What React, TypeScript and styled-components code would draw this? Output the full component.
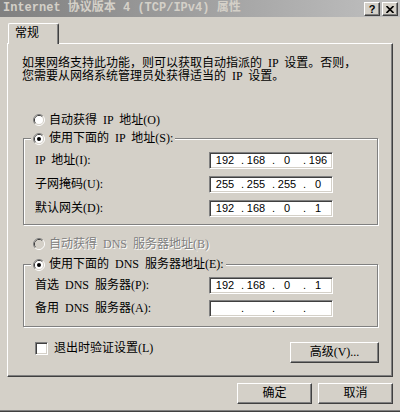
import styled, { createGlobalStyle } from "styled-components";

const face = "#d4d0c8";
const shadow = "#808080";
const darkShadow = "#404040";
const highlight = "#ffffff";
const uiFont = `"Liberation Serif", "Noto Sans CJK SC", serif`;

const GlobalStyle = createGlobalStyle`
  html, body {
    margin: 0;
    padding: 0;
    background: ${face};
  }
  * {
    box-sizing: border-box;
  }
`;

const Window = styled.div`
  width: 400px;
  height: 412px;
  display: flex;
  flex-direction: column;
  background: ${face};
  box-shadow: inset 0 -1px 0 ${darkShadow}, inset 0 -2px 0 ${shadow};
  font-family: ${uiFont};
  font-size: 12px;
  color: #000;
  overflow: hidden;
`;

const TitleBar = styled.div`
  flex: none;
  height: 17px;
  display: flex;
  padding: 0 2px 0 3px;
  background: linear-gradient(to right, #808080, #c0c0c0);
`;

const Title = styled.span`
  flex: 1;
  font-family: "Liberation Mono", "Noto Sans CJK SC", monospace;
  font-weight: bold;
  font-size: 12px;
  line-height: 17px;
  color: ${face};
  white-space: nowrap;
`;

const CaptionButtons = styled.div`
  display: flex;
  gap: 2px;
  margin-top: 2px;
`;

const CaptionButton = styled.div`
  width: 16px;
  height: 14px;
  display: flex;
  align-items: center;
  justify-content: center;
  background: ${face};
  border-top: 1px solid ${highlight};
  border-left: 1px solid ${highlight};
  border-right: 1px solid ${darkShadow};
  border-bottom: 1px solid ${darkShadow};
  box-shadow: inset -1px -1px 0 ${shadow};
  font-family: "Liberation Sans", sans-serif;
  font-weight: bold;
  font-size: 11px;
  line-height: 11px;
`;

const TabStrip = styled.div`
  flex: none;
  display: flex;
  height: 20px;
  margin-top: 6px;
  padding-left: 8px;
`;

const Tab = styled.div`
  position: relative;
  z-index: 1;
  width: 51px;
  height: 21px;
  padding: 3px 0 0 6px;
  background: ${face};
  border-top: 1px solid ${highlight};
  border-left: 1px solid ${highlight};
  border-right: 1px solid ${darkShadow};
  border-top-left-radius: 2px;
  border-top-right-radius: 2px;
  box-shadow: inset -1px 0 0 ${shadow};
  line-height: 13px;
`;

const Panel = styled.div`
  flex: none;
  height: 334px;
  margin: 0 7px;
  padding: 13px 0 0 14px;
  display: flex;
  flex-direction: column;
  word-spacing: 3px;
  border-top: 1px solid ${highlight};
  border-left: 1px solid ${highlight};
  border-right: 1px solid ${darkShadow};
  border-bottom: 1px solid ${darkShadow};
  box-shadow: inset -1px -1px 0 ${shadow};
`;

const Intro = styled.p`
  margin: 0;
  line-height: 13px;
  white-space: nowrap;
`;

const OptionRow = styled.div<{ $top: number }>`
  display: flex;
  align-items: center;
  gap: 4px;
  height: 16px;
  margin-top: ${(p) => p.$top}px;
  padding-left: 11px;
  line-height: 13px;
`;

const OptionText = styled.span<{ $disabled?: boolean }>`
  white-space: nowrap;
  color: ${(p) => (p.$disabled ? shadow : "#000")};
  text-shadow: ${(p) => (p.$disabled ? `1px 1px 0 ${highlight}` : "none")};
`;

const Group = styled.fieldset<{ $top: number; $gap: number; $padTop: number; $padBottom: number }>`
  width: 355px;
  margin: ${(p) => p.$top}px 0 0 1px;
  padding: ${(p) => p.$padTop}px 0 ${(p) => p.$padBottom}px 11px;
  display: flex;
  flex-direction: column;
  gap: ${(p) => p.$gap}px;
  border: 1px solid ${shadow};
  box-shadow: inset 1px 1px 0 ${highlight}, 1px 1px 0 ${highlight};
`;

const GroupLegend = styled.legend`
  display: flex;
  align-items: flex-start;
  gap: 4px;
  height: 15px;
  margin-left: -4px;
  padding: 0 2px;
  background: ${face};
  line-height: 15px;
  white-space: nowrap;
`;

const RadioSvg = styled.svg<{ $offset?: number }>`
  flex: none;
  display: block;
  margin-top: ${(p) => p.$offset ?? 0}px;
`;

const FieldRow = styled.div`
  display: flex;
  align-items: center;
  height: 17px;
`;

const FieldLabel = styled.span`
  width: 174px;
  line-height: 13px;
  white-space: nowrap;
`;

const IpBox = styled.div`
  width: 124px;
  height: 17px;
  display: flex;
  align-items: center;
  padding-left: 4px;
  background: #fff;
  border-top: 1px solid ${shadow};
  border-left: 1px solid ${shadow};
  border-right: 1px solid ${highlight};
  border-bottom: 1px solid ${highlight};
  box-shadow: inset 1px 1px 0 ${darkShadow}, inset -1px -1px 0 ${face};
  font-family: "Liberation Sans", sans-serif;
  font-size: 11px;
  line-height: 13px;
  word-spacing: 0;
`;

const Octet = styled.span`
  width: 22px;
  text-align: center;
`;

const Dot = styled.span`
  width: 9px;
  padding-right: 1px;
  text-align: right;
`;

const BottomRow = styled.div`
  width: 356px;
  margin: 15px 0 0 1px;
  padding-left: 12px;
  display: flex;
  justify-content: space-between;
  align-items: flex-start;
`;

const CheckLabel = styled.label`
  display: flex;
  align-items: flex-start;
  gap: 6px;
  line-height: 13px;
  white-space: nowrap;
`;

const CheckBox = styled.span`
  width: 13px;
  height: 13px;
  background: #fff;
  border-top: 1px solid ${shadow};
  border-left: 1px solid ${shadow};
  border-right: 1px solid ${highlight};
  border-bottom: 1px solid ${highlight};
  box-shadow: inset 1px 1px 0 ${darkShadow}, inset -1px -1px 0 ${face};
`;

const Button = styled.button<{ $width: number }>`
  width: ${(p) => p.$width}px;
  height: 21px;
  padding: 0;
  background: ${face};
  color: #000;
  font-family: ${uiFont};
  font-size: 12px;
  line-height: 13px;
  border-top: 1px solid ${highlight};
  border-left: 1px solid ${highlight};
  border-right: 1px solid ${darkShadow};
  border-bottom: 1px solid ${darkShadow};
  border-radius: 0;
  box-shadow: inset -1px -1px 0 ${shadow};
`;

const DialogButtons = styled.div`
  display: flex;
  justify-content: flex-end;
  gap: 6px;
  margin-top: 6px;
  padding-right: 7px;
`;

type RadioProps = { checked?: boolean; disabled?: boolean; offset?: number };

const Radio = ({ checked, disabled, offset }: RadioProps) => (
  <RadioSvg $offset={offset} width="12" height="12" viewBox="0 0 12 12">
    <path d="M2.11 9.89 A5.5 5.5 0 0 1 9.89 2.11" stroke={shadow} fill="none" />
    <path d="M9.89 2.11 A5.5 5.5 0 0 1 2.11 9.89" stroke={highlight} fill="none" />
    <path d="M2.82 9.18 A4.5 4.5 0 0 1 9.18 2.82" stroke={darkShadow} fill="none" />
    <path d="M9.18 2.82 A4.5 4.5 0 0 1 2.82 9.18" stroke={face} fill="none" />
    <circle cx="6" cy="6" r="4" fill={disabled ? face : "#fff"} />
    {checked && <circle cx="6" cy="6" r="2" fill="#000" />}
  </RadioSvg>
);

const IpAddress = ({ parts }: { parts: string[] }) => (
  <IpBox>
    {parts.map((part, i) => (
      <span key={i} style={{ display: "contents" }}>
        <Octet>{part}</Octet>
        {i < 3 && <Dot>.</Dot>}
      </span>
    ))}
  </IpBox>
);

const ipRows = [
  { label: "IP 地址(I):", parts: ["192", "168", "0", "196"] },
  { label: "子网掩码(U):", parts: ["255", "255", "255", "0"] },
  { label: "默认网关(D):", parts: ["192", "168", "0", "1"] },
];

const dnsRows = [
  { label: "首选 DNS 服务器(P):", parts: ["192", "168", "0", "1"] },
  { label: "备用 DNS 服务器(A):", parts: ["", "", "", ""] },
];

const App = () => {
  return (
    <>
      <GlobalStyle />
      <Window>
        <TitleBar>
          <Title>Internet 协议版本 4 (TCP/IPv4) 属性</Title>
          <CaptionButtons>
            <CaptionButton>?</CaptionButton>
            <CaptionButton>
              <svg width="8" height="7" viewBox="0 0 8 7">
                <path d="M0.5 0 L7.5 7 M7.5 0 L0.5 7" stroke="#000" strokeWidth="1.6" />
              </svg>
            </CaptionButton>
          </CaptionButtons>
        </TitleBar>

        <TabStrip>
          <Tab>常规</Tab>
        </TabStrip>

        <Panel>
          <Intro>
            如果网络支持此功能，则可以获取自动指派的 IP 设置。否则，
            <br />
            您需要从网络系统管理员处获得适当的 IP 设置。
          </Intro>

          <OptionRow $top={29}>
            <Radio />
            <OptionText>自动获得 IP 地址(O)</OptionText>
          </OptionRow>

          <Group $top={3} $gap={7} $padTop={6} $padBottom={7}>
            <GroupLegend>
              <Radio checked offset={2} />
              使用下面的 IP 地址(S):
            </GroupLegend>
            {ipRows.map((row) => (
              <FieldRow key={row.label}>
                <FieldLabel>{row.label}</FieldLabel>
                <IpAddress parts={row.parts} />
              </FieldRow>
            ))}
          </Group>

          <OptionRow $top={11}>
            <Radio disabled />
            <OptionText $disabled>自动获得 DNS 服务器地址(B)</OptionText>
          </OptionRow>

          <Group $top={5} $gap={6} $padTop={5} $padBottom={9}>
            <GroupLegend>
              <Radio checked offset={2} />
              使用下面的 DNS 服务器地址(E):
            </GroupLegend>
            {dnsRows.map((row) => (
              <FieldRow key={row.label}>
                <FieldLabel>{row.label}</FieldLabel>
                <IpAddress parts={row.parts} />
              </FieldRow>
            ))}
          </Group>

          <BottomRow>
            <CheckLabel>
              <CheckBox />
              退出时验证设置(L)
            </CheckLabel>
            <Button $width={89}>高级(V)...</Button>
          </BottomRow>
        </Panel>

        <DialogButtons>
          <Button $width={75}>确定</Button>
          <Button $width={75}>取消</Button>
        </DialogButtons>
      </Window>
    </>
  );
};

export default App;
